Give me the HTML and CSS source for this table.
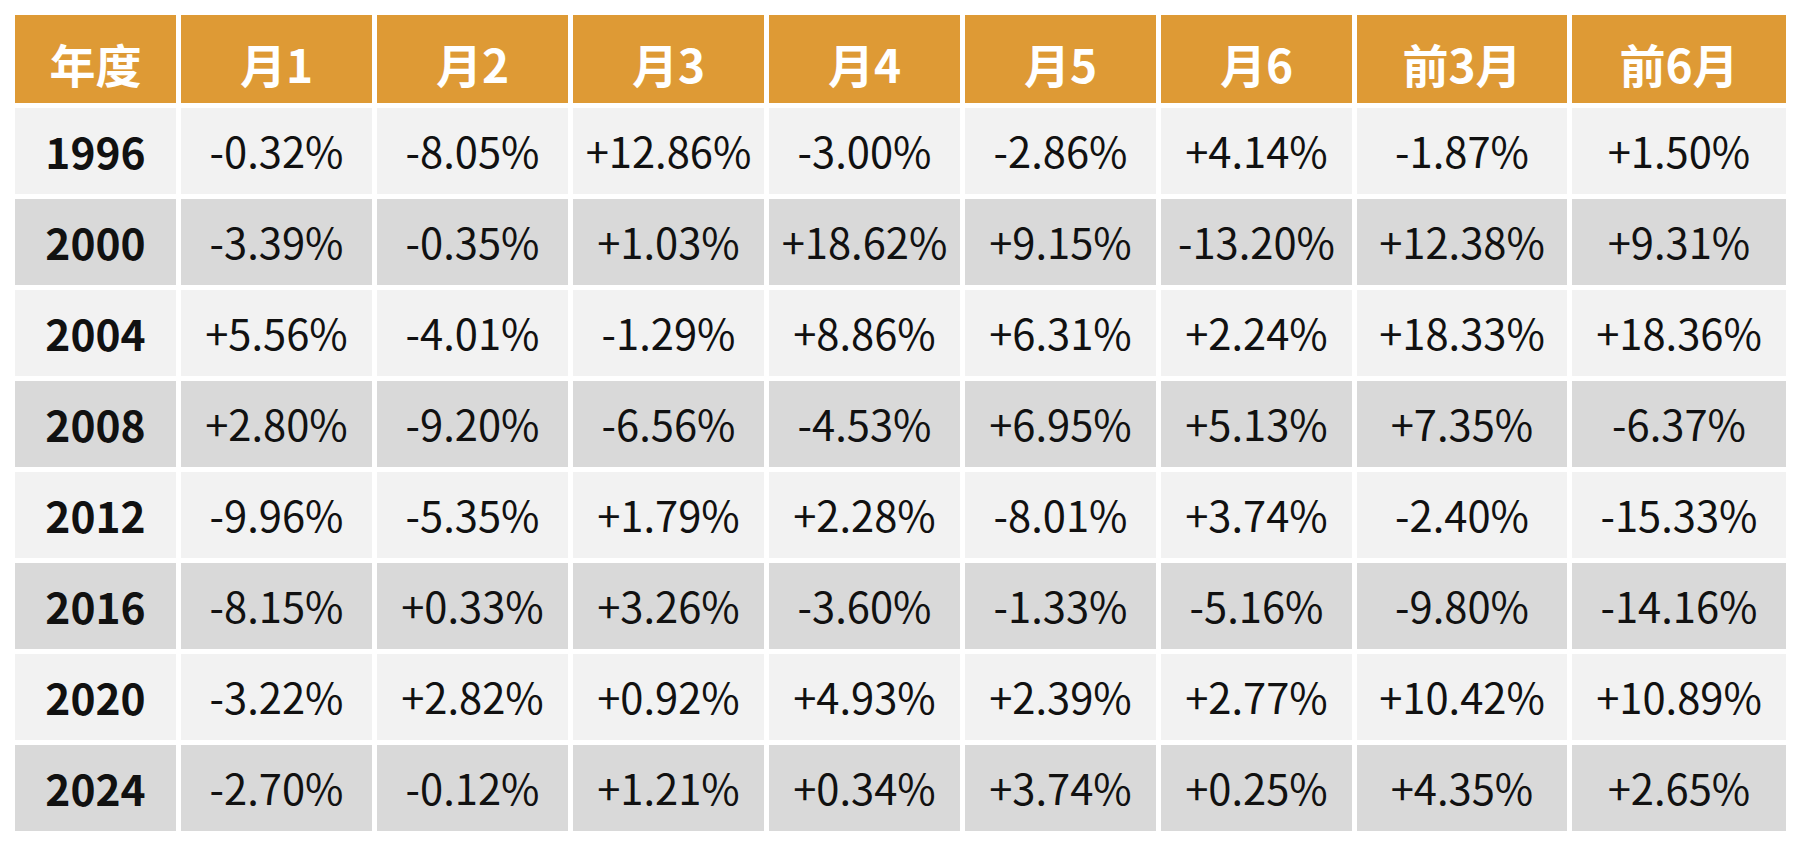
FILE: index.html
```html
<!DOCTYPE html>
<html lang="zh">
<head>
<meta charset="utf-8">
<link rel="stylesheet" href="styles.css">
</head>
<body>
<table class="grid">
  <colgroup>
    <col class="c-year"><col class="c-m"><col class="c-m"><col class="c-m"><col class="c-m"><col class="c-m"><col class="c-m"><col class="c-p3"><col class="c-p6">
  </colgroup>
  <thead>
    <tr class="head"><th>年度</th><th>月1</th><th>月2</th><th>月3</th><th>月4</th><th>月5</th><th>月6</th><th>前3月</th><th>前6月</th></tr>
  </thead>
  <tbody>
    <tr class="light"><th>1996</th><td>-0.32%</td><td>-8.05%</td><td>+12.86%</td><td>-3.00%</td><td>-2.86%</td><td>+4.14%</td><td>-1.87%</td><td>+1.50%</td></tr>
    <tr class="dark"><th>2000</th><td>-3.39%</td><td>-0.35%</td><td>+1.03%</td><td>+18.62%</td><td>+9.15%</td><td>-13.20%</td><td>+12.38%</td><td>+9.31%</td></tr>
    <tr class="light"><th>2004</th><td>+5.56%</td><td>-4.01%</td><td>-1.29%</td><td>+8.86%</td><td>+6.31%</td><td>+2.24%</td><td>+18.33%</td><td>+18.36%</td></tr>
    <tr class="dark"><th>2008</th><td>+2.80%</td><td>-9.20%</td><td>-6.56%</td><td>-4.53%</td><td>+6.95%</td><td>+5.13%</td><td>+7.35%</td><td>-6.37%</td></tr>
    <tr class="light"><th>2012</th><td>-9.96%</td><td>-5.35%</td><td>+1.79%</td><td>+2.28%</td><td>-8.01%</td><td>+3.74%</td><td>-2.40%</td><td>-15.33%</td></tr>
    <tr class="dark"><th>2016</th><td>-8.15%</td><td>+0.33%</td><td>+3.26%</td><td>-3.60%</td><td>-1.33%</td><td>-5.16%</td><td>-9.80%</td><td>-14.16%</td></tr>
    <tr class="light"><th>2020</th><td>-3.22%</td><td>+2.82%</td><td>+0.92%</td><td>+4.93%</td><td>+2.39%</td><td>+2.77%</td><td>+10.42%</td><td>+10.89%</td></tr>
    <tr class="dark"><th>2024</th><td>-2.70%</td><td>-0.12%</td><td>+1.21%</td><td>+0.34%</td><td>+3.74%</td><td>+0.25%</td><td>+4.35%</td><td>+2.65%</td></tr>
  </tbody>
</table>
</body>
</html>
```
FILE: styles.css
```css
html, body {
  margin: 0;
  padding: 0;
  background: #ffffff;
}
body {
  padding: 10px 9px 9px 10px;
  font-family: "Noto Sans CJK SC", "Noto Sans", sans-serif;
}
.grid {
  border-collapse: separate;
  border-spacing: 5px;
  table-layout: fixed;
  width: 1781px;
}
.c-year { width: 161px; }
.c-m { width: 191px; }
.c-p3 { width: 210px; }
.c-p6 { width: 214px; }
.grid th, .grid td {
  box-sizing: border-box;
  padding: 0;
  text-align: center;
  vertical-align: middle;
  white-space: nowrap;
  overflow: hidden;
  line-height: 1;
}
.head th {
  height: 88px;
  padding-top: 8px;
  background: #de9a35;
  color: #ffffff;
  font-weight: 700;
  font-size: 46px;
}
tbody th, tbody td {
  height: 86px;
  padding-top: 4px;
  font-size: 41.7px;
  color: #111111;
}
tbody th { font-weight: 700; font-size: 42.5px; }
tbody td { font-weight: 400; }
.light th, .light td { background: #f2f2f2; }
.dark th, .dark td { background: #d9d9d9; }
```
